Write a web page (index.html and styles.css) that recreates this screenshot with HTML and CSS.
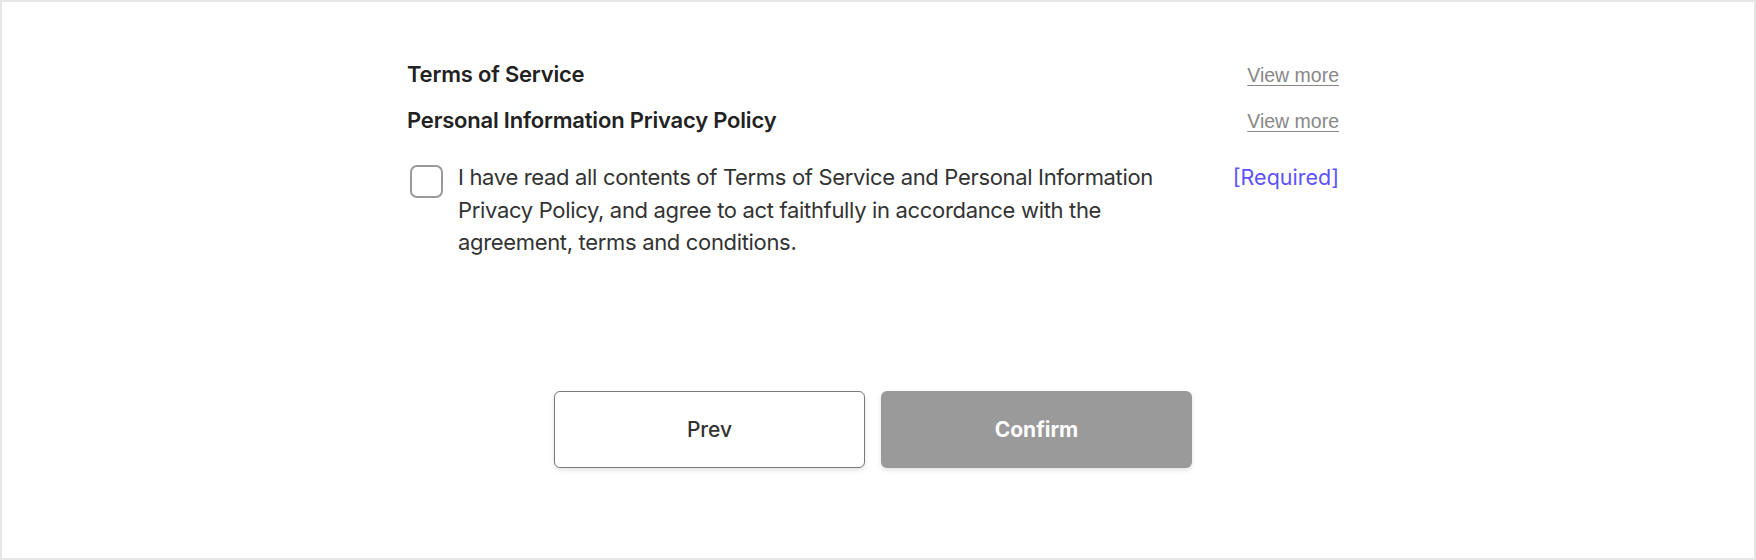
FILE: index.html
```html
<!DOCTYPE html>
<html>
<head>
<meta charset="UTF-8">
<title>Terms Agreement</title>
<link rel="stylesheet" href="styles.css">
</head>
<body>
   <div class="frame">
      <div class="agree-box">
         <div class="term-row">
            <h3 class="term-title">Terms of Service</h3>
            <a href="#" class="view-more">View more</a>
         </div>
         <div class="term-row">
            <h3 class="term-title">Personal Information Privacy Policy</h3>
            <a href="#" class="view-more">View more</a>
         </div>
         <label class="check-row">
            <input type="checkbox" id="agreeAll" class="check-input">
            <span class="check-box"></span>
            <span class="check-text">I have read all contents of Terms of Service and Personal Information Privacy Policy, and agree to act faithfully in accordance with the agreement, terms and conditions.</span>
            <span class="required">[Required]</span>
         </label>
      </div>
      <div class="btn-group">
         <input type="button" class="btn prev" value="Prev">
         <input type="button" class="btn confirm" id="confirmBtn" value="Confirm" disabled>
      </div>
   </div>
<script>
document.getElementById('agreeAll').addEventListener('change', function () {
    document.getElementById('confirmBtn').disabled = !this.checked;
});
</script>
</body>
</html>
```

FILE: styles.css
```css
body {
  margin: 0;
  padding: 0;
  font-family: Inter, "Noto Sans", Arial, sans-serif;
  background-color: #fff;
}
.frame {
  box-sizing: border-box;
  height: 560px;
  border: 2px solid #e6e6e6;
  padding: 59px 10px 0 0;
}
.agree-box {
  width: 932px;
  margin: 0 auto;
}
.term-row {
  display: flex;
  justify-content: space-between;
  align-items: baseline;
  margin-bottom: 20px;
}
.term-title {
  margin: 0;
  font-size: 22px;
  line-height: 26px;
  font-weight: 600;
  color: #222;
  letter-spacing: -0.2px;
}
.view-more {
  font-family: "Liberation Sans", Arial, sans-serif;
  font-size: 19.5px;
  color: #888;
  text-decoration: underline;
  text-underline-offset: 3px;
}
.check-row {
  display: flex;
  align-items: flex-start;
  margin-top: 28px;
  cursor: pointer;
}
.check-input {
  display: none;
}
.check-box {
  flex: none;
  box-sizing: border-box;
  width: 33px;
  height: 33px;
  margin: 4px 15px 0 3px;
  border: 2px solid #9a9a9a;
  border-radius: 7px;
  background-color: #fff;
}
.check-input:checked + .check-box {
  background-color: #5c52ff;
  border-color: #5c52ff;
}
.check-text {
  flex: 0 1 725px;
  font-size: 22px;
  line-height: 32.5px;
  color: #333;
  letter-spacing: -0.33px;
}
.required {
  margin-left: auto;
  font-size: 21.5px;
  line-height: 32.5px;
  color: #5c52ff;
}
.btn-group {
  display: flex;
  justify-content: center;
  gap: 16px;
  margin-top: 132px;
}
.btn {
  box-sizing: border-box;
  width: 311px;
  height: 77px;
  border-radius: 6px;
  font-family: Inter, "Noto Sans", Arial, sans-serif;
  font-size: 21px;
  cursor: pointer;
  box-shadow: 0 2px 5px rgba(0, 0, 0, 0.12);
}
.btn.prev {
  background-color: #fff;
  border: 1.5px solid #7a7a7a;
  color: #333;
  font-weight: 500;
}
.btn.confirm {
  background-color: #9a9a9a;
  border: none;
  color: #fff;
  font-weight: 700;
}
.btn.confirm:disabled {
  cursor: default;
}
```
